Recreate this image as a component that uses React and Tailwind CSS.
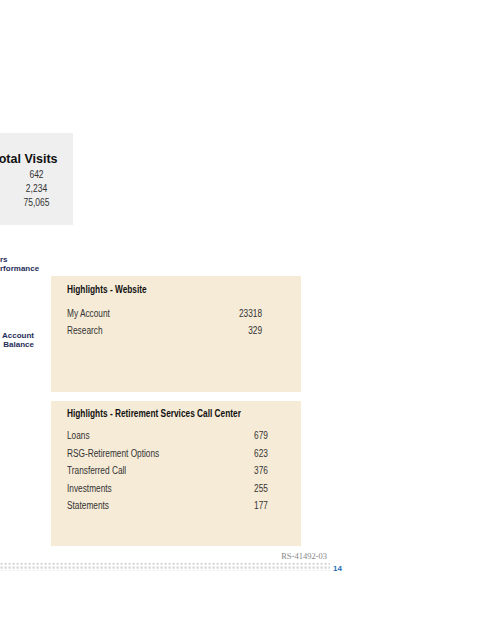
export default function App() {
    const website = [
        { label: 'My Account', value: '23318' },
        { label: 'Research', value: '329' }
    ];
    const callCenter = [
        { label: 'Loans', value: '679' },
        { label: 'RSG-Retirement Options', value: '623' },
        { label: 'Transferred Call', value: '376' },
        { label: 'Investments', value: '255' },
        { label: 'Statements', value: '177' }
    ];

    // the slide uses a narrow face; squeeze Arial-width text to match
    const squeeze = 'origin-left scale-x-[0.83]';

    return (
        <div className="w-[480px] h-[621px] bg-white overflow-hidden pt-[133px] font-['Liberation_Sans',Arial,sans-serif]">
            {/* Visits box */}
            <div className="w-[73px] h-[92px] bg-[#efefef] overflow-hidden pt-[18px]">
                <div className="ml-[-8px] whitespace-nowrap text-[12.5px] leading-[16px] font-bold text-[#111]">Total Visits</div>
                <div className="flex flex-col items-center text-[10px] leading-[14px] text-[#333] mt-[1px] scale-x-[0.85]">
                    <span>642</span>
                    <span>2,234</span>
                    <span>75,065</span>
                </div>
            </div>

            <div className="flex mt-[29px]">
                {/* clipped side labels */}
                <div className="w-[51px] shrink-0 text-[8px] leading-[9px] font-bold text-[#1f2d5a] whitespace-nowrap">
                    <div className="mt-[1px]">rs</div>
                    <div>rformance</div>
                    <div className="w-[34px] text-right mt-[58px]">
                        <div>Account</div>
                        <div>Balance</div>
                    </div>
                </div>

                {/* highlights */}
                <div className="flex flex-col gap-[9px] pt-[22px]">
                    <div className="w-[250px] h-[116px] bg-[#f6ebd7] pl-[16px] pt-[8px]">
                        <div className={`text-[10px] leading-[12px] font-bold text-[#111] whitespace-nowrap ${squeeze}`}>Highlights - Website</div>
                        <div className={`w-[235px] mt-[9px] flex flex-col ${squeeze}`}>
                            {website.map(row => (
                                <div key={row.label} className="flex justify-between text-[10px] leading-[17px] text-[#333]">
                                    <span>{row.label}</span>
                                    <span>{row.value}</span>
                                </div>
                            ))}
                        </div>
                    </div>

                    <div className="w-[250px] h-[145px] bg-[#f6ebd7] pl-[16px] pt-[7px]">
                        <div className={`text-[10px] leading-[12px] font-bold text-[#111] whitespace-nowrap ${squeeze}`}>Highlights - Retirement Services Call Center</div>
                        <div className={`w-[242px] mt-[7px] flex flex-col ${squeeze}`}>
                            {callCenter.map(row => (
                                <div key={row.label} className="flex justify-between text-[10px] leading-[17.5px] text-[#333] whitespace-nowrap">
                                    <span>{row.label}</span>
                                    <span>{row.value}</span>
                                </div>
                            ))}
                        </div>
                    </div>
                </div>
            </div>

            {/* footer */}
            <div className="w-[327px] text-right mt-[5px] text-[8.5px] leading-[10px] text-[#888] font-['Liberation_Serif',serif]">RS-41492-03</div>
            <div className="flex items-center mt-[1px] h-[10px]">
                <svg width="330" height="10" className="block">
                    <defs>
                        <pattern id="dots" width="4" height="4" patternUnits="userSpaceOnUse">
                            <rect x="0.5" y="0.5" width="2.2" height="2.2" fill="#d4d4d4" />
                        </pattern>
                    </defs>
                    <rect x="0" y="1" width="330" height="8" fill="url(#dots)" />
                </svg>
                <span className="ml-[3px] text-[8px] font-bold text-[#1f6db5] leading-[10px] mt-[3px]">14</span>
            </div>
        </div>
    );
}
